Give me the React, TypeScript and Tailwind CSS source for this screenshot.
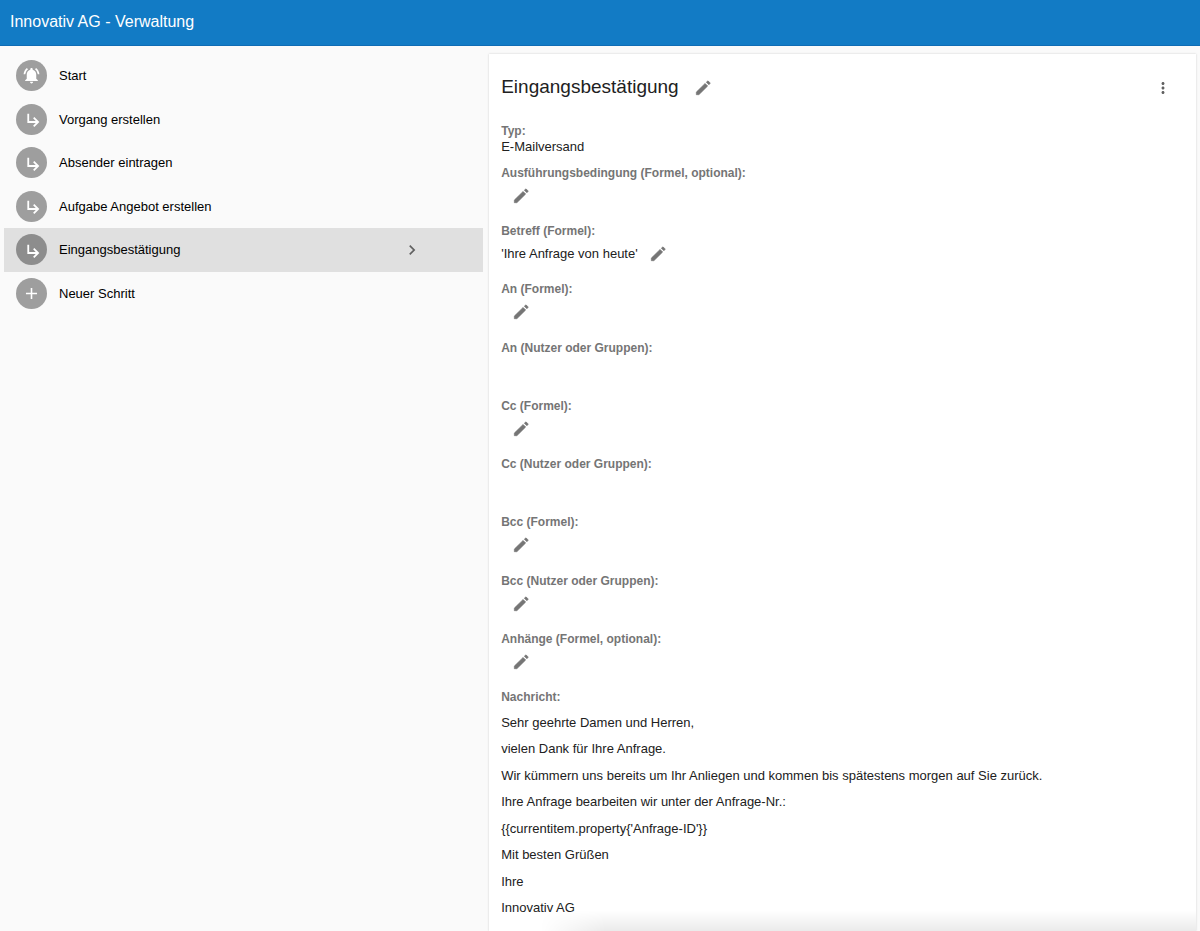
import { useState } from "react";
import type { ReactNode } from "react";
import { MdAdd, MdChevronRight, MdMoreVert, MdNotificationsActive } from "react-icons/md";
import clsx from "clsx";

interface Step {
  id: string;
  title: string;
  icon: ReactNode;
}

interface Field {
  label: string;
  value?: string;
  editable: boolean;
}

const STEPS: Step[] = [
  { id: "start", title: "Start", icon: <MdNotificationsActive size={19} /> },
  { id: "create", title: "Vorgang erstellen", icon: <SubStepIcon /> },
  { id: "sender", title: "Absender eintragen", icon: <SubStepIcon /> },
  { id: "offer", title: "Aufgabe Angebot erstellen", icon: <SubStepIcon /> },
  { id: "confirm", title: "Eingangsbestätigung", icon: <SubStepIcon /> },
  { id: "new", title: "Neuer Schritt", icon: <MdAdd size={19} /> },
];

const FIELDS: Field[] = [
  { label: "Ausführungsbedingung (Formel, optional):", editable: true },
  { label: "Betreff (Formel):", value: "'Ihre Anfrage von heute'", editable: true },
  { label: "An (Formel):", editable: true },
  { label: "An (Nutzer oder Gruppen):", editable: false },
  { label: "Cc (Formel):", editable: true },
  { label: "Cc (Nutzer oder Gruppen):", editable: false },
  { label: "Bcc (Formel):", editable: true },
  { label: "Bcc (Nutzer oder Gruppen):", editable: true },
  { label: "Anhänge (Formel, optional):", editable: true },
];

const MESSAGE = [
  "Sehr geehrte Damen und Herren,",
  "vielen Dank für Ihre Anfrage.",
  "Wir kümmern uns bereits um Ihr Anliegen und kommen bis spätestens morgen auf Sie zurück.",
  "Ihre Anfrage bearbeiten wir unter der Anfrage-Nr.:",
  "{{currentitem.property{'Anfrage-ID'}}",
  "Mit besten Grüßen",
  "Ihre",
  "Innovativ AG",
];

export default function App() {
  const [selected, setSelected] = useState("confirm");

  return (
    <div className="relative flex h-screen flex-col overflow-hidden bg-[#fafafa] font-['Liberation_Sans',Arial,sans-serif] text-[13px] leading-4 text-[#212121]">
      <header className="flex h-[46px] shrink-0 items-center border-b border-[#0f6cb5] bg-[#127bc5] px-[10px] pb-[2px]">
        <h1 className="text-base text-white">Innovativ AG - Verwaltung</h1>
      </header>

      <main className="grid min-h-0 flex-1 grid-cols-[40fr_59fr] gap-[6px] px-1 pt-2">
        <nav>
          <ul className="grid min-h-[261px] auto-rows-fr">
            {STEPS.map((step) => (
              <StepRow
                key={step.id}
                step={step}
                active={step.id === selected}
                onSelect={() => setSelected(step.id)}
              />
            ))}
          </ul>
        </nav>

        <section className="bg-white px-3 pt-5 shadow-[0_0_2px_rgba(0,0,0,0.18)]">
          <div className="flex items-center justify-between pr-[11px]">
            <div className="flex items-center gap-[14px]">
              <h2 className="pb-[2px] text-[19px] leading-[26px]">Eingangsbestätigung</h2>
              <EditButton label="Titel bearbeiten" />
            </div>
            <button aria-label="Weitere Aktionen" className="p-px text-[#616161]">
              <MdMoreVert size={18} />
            </button>
          </div>

          <dl className="mt-[21px]">
            <dt className="text-xs font-bold text-[#757575]">Typ:</dt>
            <dd>E-Mailversand</dd>
          </dl>

          <dl className="mt-[10px] grid min-h-[524px] auto-rows-fr">
            {FIELDS.map((field) => (
              <FieldRow key={field.label} field={field} />
            ))}
          </dl>

          <h3 className="text-xs font-bold text-[#757575]">Nachricht:</h3>
          <div className="mt-[10px] flex min-h-[201px] flex-col justify-between">
            {MESSAGE.map((line) => (
              <p key={line}>{line}</p>
            ))}
          </div>
        </section>
      </main>

      <div className="pointer-events-none absolute right-1 bottom-0 left-[45%] h-5 bg-linear-to-t from-black/8 to-transparent mask-l-from-90%" />
    </div>
  );
}

function StepRow({
  step,
  active,
  onSelect,
}: {
  step: Step;
  active: boolean;
  onSelect: () => void;
}) {
  return (
    <li className={clsx("flex", active && "bg-[#e0e0e0]")}>
      <button
        onClick={onSelect}
        className="flex flex-1 items-center gap-3 pr-[61px] pl-3 text-left text-black"
      >
        <span
          className={clsx(
            "flex size-[31px] items-center justify-center rounded-full text-white",
            active ? "bg-[#8d8d8d]" : "bg-[#9e9e9e]",
          )}
        >
          {step.icon}
        </span>
        <span className="flex-1 pt-px">{step.title}</span>
        {active && <MdChevronRight size={20} className="text-[#616161]" />}
      </button>
    </li>
  );
}

function FieldRow({ field }: { field: Field }) {
  return (
    <div>
      <dt className="text-xs leading-4 font-bold text-[#757575]">{field.label}</dt>
      <dd className="flex h-[30px] items-center gap-[10px]">
        {field.value && <span>{field.value}</span>}
        {field.editable && (
          <span className={clsx("flex", !field.value && "pl-[10px]")}>
            <EditButton label={`${field.label} bearbeiten`} />
          </span>
        )}
      </dd>
    </div>
  );
}

function EditButton({ label }: { label: string }) {
  return (
    <button aria-label={label} className="p-px text-[#757575]">
      <svg
        width="18"
        height="18"
        viewBox="0 0 18 18"
        fill="currentColor"
        stroke="currentColor"
        strokeWidth="0.6"
        strokeLinejoin="round"
      >
        <path d="M2.3 15.7v-2.6l8.8-8.7 2.6 2.6-8.8 8.7Z" />
        <path d="M12.3 3.2 13.5 2.1q.4-.3.8 0l1.7 1.7q.3.4 0 .8l-1.1 1.2Z" />
      </svg>
    </button>
  );
}

// the arrow sits slightly right of the badge's centre
function SubStepIcon() {
  return (
    <svg
      width="18"
      height="18"
      viewBox="-2 -1 24 24"
      fill="none"
      stroke="currentColor"
      strokeWidth="2.4"
    >
      <path d="M5 4v11h12M12.3 9.2l5.8 5.8-5.8 5.8" />
    </svg>
  );
}
